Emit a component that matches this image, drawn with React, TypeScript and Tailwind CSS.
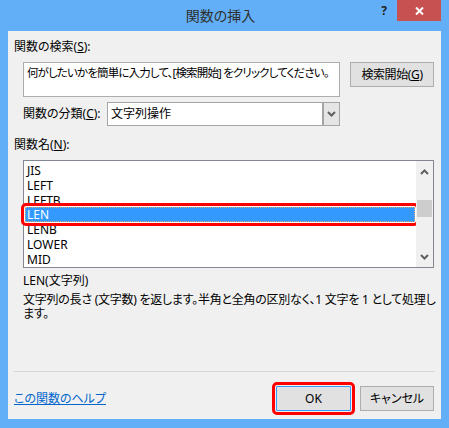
import React from "react";

const FONT = "[font-family:'Noto_Sans','Noto_Sans_CJK_JP',sans-serif] [font-feature-settings:'palt']";

const functions = ["JIS", "LEFT", "LEFTB", "LEN", "LENB", "LOWER", "MID"];

function ChevronDown({ className = "" }: { className?: string }) {
  return (
    <svg width="9" height="6" viewBox="0 0 9 6" className={className}>
      <polyline points="1,1 4.5,4.5 8,1" fill="none" stroke="#606060" strokeWidth="2" />
    </svg>
  );
}

function ChevronUp({ className = "" }: { className?: string }) {
  return (
    <svg width="9" height="6" viewBox="0 0 9 6" className={className}>
      <polyline points="1,5 4.5,1.5 8,5" fill="none" stroke="#606060" strokeWidth="2" />
    </svg>
  );
}

function Button({
  children,
  primary = false,
  className = "",
}: {
  children: React.ReactNode;
  primary?: boolean;
  className?: string;
}) {
  return (
    <div
      className={`flex items-center justify-center bg-[#e1e1e1] border text-[12px] text-[#000] whitespace-nowrap ${
        primary ? "border-[#3399ff]" : "border-[#adadad]"
      } ${className}`}
    >
      {children}
    </div>
  );
}

export default function App() {
  return (
    <div className={`w-[449px] h-[428px] bg-[#63aff7] flex flex-col ${FONT}`}>
      {/* title bar */}
      <div className="h-[31px] flex items-start shrink-0">
        <div className="flex-1" />
        <div className="h-[31px] leading-[31px] text-[14px] text-[#2f2f2f]">関数の挿入</div>
        <div className="flex-1 flex justify-end pr-[8px]">
          <div className="w-[26px] h-[21px] flex items-center justify-center text-[12px] font-bold text-[#222]">
            ?
          </div>
          <div className="w-[44px] h-[21px] bg-[#c75050] flex items-center justify-center">
            <svg width="9" height="8" viewBox="0 0 9 8">
              <path d="M1 0.5 L8 7.5 M8 0.5 L1 7.5" stroke="#fff" strokeWidth="2" />
            </svg>
          </div>
        </div>
      </div>

      {/* dialog body */}
      <div className="mx-[8px] h-[388px] bg-[#f0f0f0] flex flex-col px-[6px] pt-[8px] text-[12px] text-[#000]">
        <div className="h-[16px] leading-[16px]">
          関数の検索(<u>S</u>):
        </div>

        <div className="mt-[7px] pl-[9px] flex items-start gap-[10px]">
          <div className="w-[317px] h-[35px] bg-white border border-[#abadb3] px-[3px] pt-[2px] leading-[16px] whitespace-nowrap overflow-hidden text-[11.5px] tracking-[-0.85px]">
            何がしたいかを簡単に入力して、[検索開始] をクリックしてください。
          </div>
          <Button className="w-[84px] h-[25px] tracking-[-0.4px]">
            検索開始(<u>G</u>)
          </Button>
        </div>

        <div className="mt-[5px] pl-[9px] flex items-center">
          <div className="w-[84px] leading-[16px] whitespace-nowrap">
            関数の分類(<u>C</u>):
          </div>
          <div className="w-[233px] h-[24px] bg-white border border-[#a5a5a5] flex">
            <div className="flex-1 pl-[3px] leading-[22px]">文字列操作</div>
            <div className="w-[17px] bg-[#e5e5e5] border-l-2 border-[#a5a5a5] flex items-center justify-center">
              <ChevronDown />
            </div>
          </div>
        </div>

        <div className="mt-[11px] h-[16px] leading-[16px]">
          関数名(<u>N</u>):
        </div>

        <div className="mt-[7px] ml-[9px] w-[411px] h-[108px] bg-white border border-[#828790] flex">
          <div className="flex-1 pt-[2px]">
            {functions.map((name) =>
              name === "LEN" ? (
                <div
                  key={name}
                  className="mx-[1px] h-[14.8px] leading-[13px] pl-[1px] bg-[#3399ff] text-white border border-dotted border-[#d9a86c] rounded-[1px] outline-[3px] outline-solid outline-[#ff0000] outline-offset-[1px]"
                >
                  {name}
                </div>
              ) : (
                <div key={name} className="mx-[1px] h-[14.8px] leading-[13px] pl-[1px] border border-transparent">
                  {name}
                </div>
              )
            )}
          </div>
          <div className="w-[17px] bg-[#f0f0f0] flex flex-col items-center">
            <div className="h-[17px] flex items-center justify-center mt-[2px]">
              <ChevronUp />
            </div>
            <div className="flex-1 w-full px-[1px]">
              <div className="mt-[20px] h-[17px] bg-[#cdcdcd]" />
            </div>
            <div className="h-[17px] flex items-center justify-center mb-[2px]">
              <ChevronDown />
            </div>
          </div>
        </div>

        <div className="mt-[5px] pl-[9px] leading-[16px]">LEN(文字列)</div>
        <div className="mt-[4px] pl-[9px] leading-[14px] whitespace-nowrap tracking-[-0.25px]">
          文字列の長さ (文字数) を返します。半角と全角の区別なく、1 文字を 1 として処理し
          <br />
          ます。
        </div>

        <div className="mt-[50px] h-px bg-[#d5d5d5]" />

        <div className="mt-[14px] flex items-center pr-[1px]">
          <div className="flex-1 text-[#0066cc] underline leading-[16px]">この関数のヘルプ</div>
          <Button primary className="w-[75px] h-[25px] rounded-[1px] outline-[3px] outline-solid outline-[#ff0000] outline-offset-[1px]">
            OK
          </Button>
          <Button className="ml-[9px] w-[74px] h-[25px]">キャンセル</Button>
        </div>
      </div>
    </div>
  );
}
